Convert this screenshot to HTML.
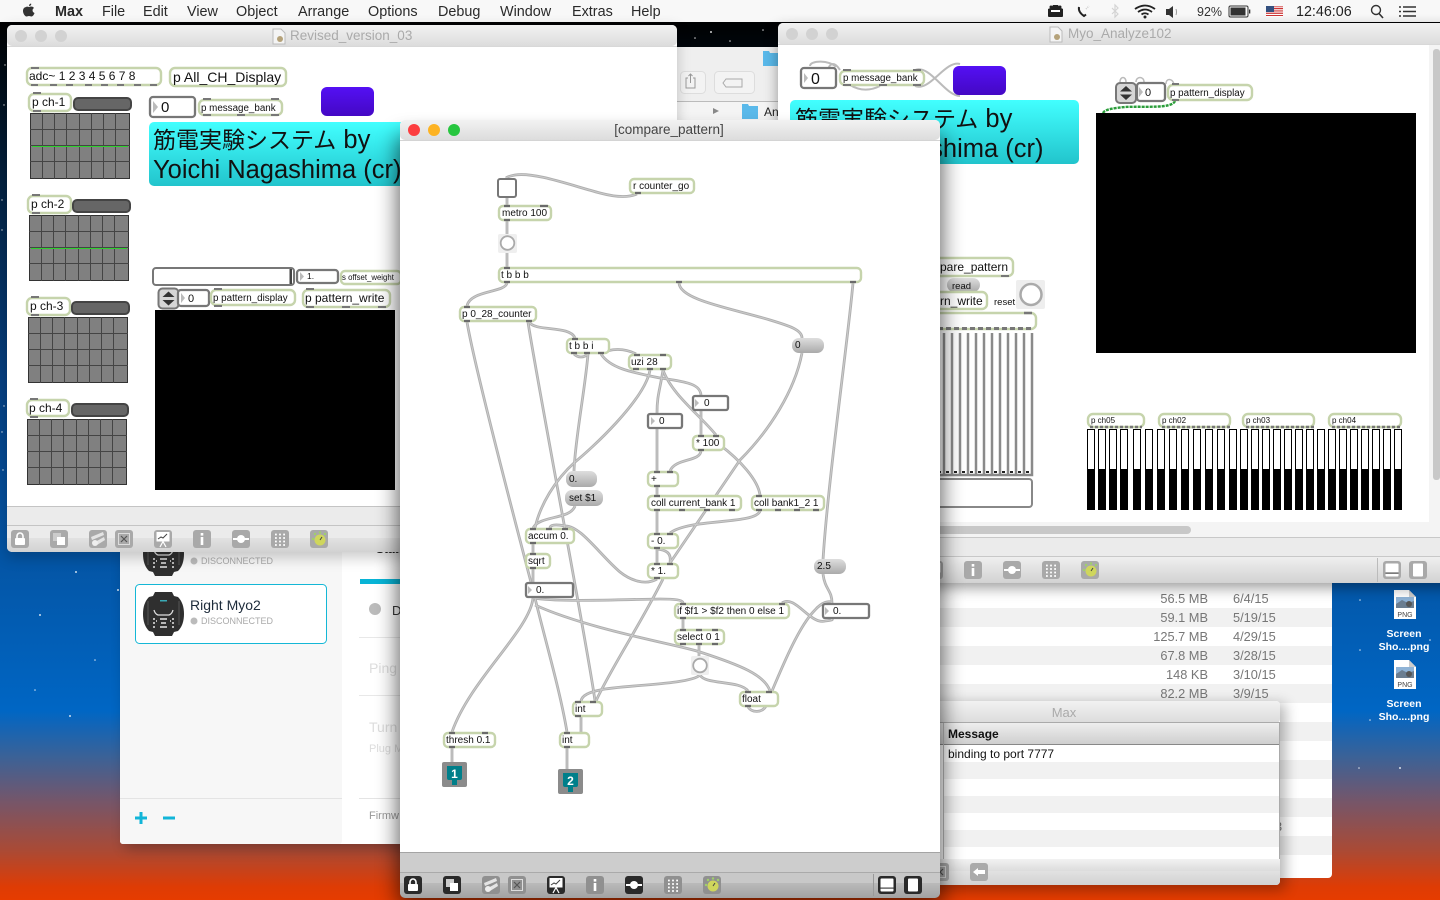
<!DOCTYPE html>
<html><head><meta charset="utf-8"><title>Max</title>
<style>
html,body{margin:0;padding:0;background:#000;width:1440px;height:900px;overflow:hidden}
svg{display:block}
text{font-family:"Liberation Sans","Noto Sans CJK JP",sans-serif;fill:#111}
.o{fill:#fff;stroke:#c6d4ac;stroke-width:2.4}
.n{fill:#fff;stroke:#777;stroke-width:2.3}
.m{fill:url(#msg)}
.t{font-size:10px}
.menu{font-size:14.4px;fill:#2a2a2a}
.f{font-size:12.8px;fill:#777}
.gl{fill:#fff}
.tri{fill:#bbb}
.cj{font-size:23px}
</style></head><body>
<svg xmlns="http://www.w3.org/2000/svg" width="1440" height="900" viewBox="0 0 1440 900">
<defs>
<linearGradient id="bg" x1="0" y1="0" x2="0" y2="1">
<stop offset="0.02" stop-color="#000"/><stop offset="0.2" stop-color="#04213f"/><stop offset="0.42" stop-color="#063f80"/><stop offset="0.62" stop-color="#0455a5"/><stop offset="0.79" stop-color="#0066c4"/><stop offset="0.84" stop-color="#3a6298"/><stop offset="0.89" stop-color="#75566a"/><stop offset="0.945" stop-color="#aa4a35"/><stop offset="0.985" stop-color="#de3c05"/><stop offset="1" stop-color="#e63c00"/>
</linearGradient>
<linearGradient id="msg" x1="0" y1="0" x2="0" y2="1"><stop offset="0" stop-color="#dedede"/><stop offset="1" stop-color="#aaa"/></linearGradient>
<linearGradient id="cy" x1="0" y1="0" x2="0" y2="1"><stop offset="0" stop-color="#42ffff"/><stop offset="1" stop-color="#22c4cc"/></linearGradient>
<linearGradient id="pu" x1="0" y1="0" x2="0" y2="1"><stop offset="0" stop-color="#5410f4"/><stop offset="1" stop-color="#4408c4"/></linearGradient>
<linearGradient id="tb" x1="0" y1="0" x2="0" y2="1"><stop offset="0" stop-color="#efefef"/><stop offset="1" stop-color="#d2d2d2"/></linearGradient>
<linearGradient id="tba" x1="0" y1="0" x2="0" y2="1"><stop offset="0" stop-color="#cacaca"/><stop offset="1" stop-color="#a2a2a2"/></linearGradient>
<linearGradient id="ti" x1="0" y1="0" x2="0" y2="1"><stop offset="0" stop-color="#f2f2f2"/><stop offset="1" stop-color="#dcdcdc"/></linearGradient>
<linearGradient id="hd" x1="0" y1="0" x2="0" y2="1"><stop offset="0" stop-color="#eeeeee"/><stop offset="1" stop-color="#cfcfcf"/></linearGradient>
<filter id="sh" x="-15%" y="-15%" width="130%" height="130%"><feGaussianBlur stdDeviation="11"/></filter>
<filter id="sh2" x="-15%" y="-15%" width="130%" height="130%"><feGaussianBlur stdDeviation="7"/></filter>
<g id="lock"><rect width="18" height="18" rx="3"/><rect class="gl" x="4" y="8" width="10" height="7" rx="1"/><path d="M6 8V6a3 3 0 0 1 6 0v2" fill="none" stroke="#fff" stroke-width="1.6"/></g>
<g id="ovl"><rect width="18" height="18" rx="3"/><rect x="3" y="3" width="8" height="8" fill="#ccc"/><rect class="gl" x="7" y="7" width="8" height="8"/></g>
<g id="tools"><rect width="18" height="18" rx="3"/><path d="M2 7l12-5 1 3-12 5zM6 12l9-5 1 3-8 5z" fill="#e4e4e4"/><circle cx="6" cy="13" r="3" fill="#eee"/></g>
<g id="xb"><rect width="18" height="18" rx="3"/><rect x="3.5" y="3.5" width="11" height="11" fill="none" stroke="#ddd"/><path d="M6 6l6 6M12 6l-6 6" stroke="#555" stroke-width="1.2"/></g>
<g id="pres"><rect width="18" height="18" rx="3"/><rect class="gl" x="2.5" y="2" width="13" height="9.5"/><path d="M4 9l3-2 2 1 4-4" stroke="#444" fill="none"/><path d="M9 11.5L6 17M9 11.5l3 5.5" stroke="#fff" stroke-width="1.2"/></g>
<g id="info"><rect width="18" height="18" rx="3"/><rect class="gl" x="7.7" y="3" width="2.6" height="2.6"/><rect class="gl" x="7.7" y="7" width="2.6" height="8"/></g>
<g id="cord"><rect width="18" height="18" rx="3"/><rect class="gl" x="1" y="8" width="16" height="2"/><circle class="gl" cx="9" cy="9" r="4"/></g>
<g id="grid"><rect width="18" height="18" rx="3"/><path d="M4 4.5h1.8M8.100 4.500h1.800M12.200 4.500h1.800M4 8h1.800M8.100 8h1.800M12.200 8h1.800M4 11.500h1.800M8.100 11.500h1.800M12.200 11.500h1.800M4 15h1.800M8.100 15h1.800M12.200 15h1.800" stroke="#fff" stroke-width="1.800" fill="none"/></g>
<g id="knob"><rect width="18" height="18" rx="3"/><circle cx="10" cy="10" r="5.500" fill="#cfd65c"/><path d="M10 10l2-3" stroke="#444"/><circle cx="3" cy="9" r="1.200" fill="#9fd06a"/><circle cx="5" cy="4" r="1.200" fill="#9fd06a"/><circle cx="10" cy="2.500" r="1.200" fill="#9fd06a"/><circle cx="15" cy="4" r="1.200" fill="#9fd06a"/></g>
<g id="pb"><rect width="18" height="18" rx="3"/><rect class="gl" x="2.500" y="2.500" width="13" height="13" rx="1"/><rect x="2.500" y="11.500" width="13" height="1.200" fill="#444"/></g>
<g id="pr"><rect width="18" height="18" rx="3"/><rect class="gl" x="4" y="2.500" width="10" height="13" rx="1"/></g>
<g id="ud"><rect x="0" y="0" width="20" height="20" rx="4" fill="#d6d6d6" stroke="#777" stroke-width="2"/><path d="M4 8.500L10 3l6 5.500zM4 11.500L10 17l6-5.500z" fill="#333"/></g>
<g id="grd"><rect x="0.500" y="0.500" width="99" height="65" fill="#808080" stroke="#333"/><path d="M12.500 0v66M24.500 0v66M36.500 0v66M49.500 0v66M61.500 0v66M73.500 0v66M85.500 0v66M0 16.500h100M0 32.500h100M0 48.500h100" stroke="#444" stroke-width="1" fill="none"/></g>
<g id="myo"><path d="M12 0h17l2 4 4 1q6 6 6 17 0 11-6 17l-4 1-2 4H12l-2-4-4-1q-6-6-6-17 0-11 6-17l4-1z" fill="#2f2f2f"/><path d="M5 9v24M36 9v24" stroke="#555" stroke-width="1" fill="none"/><path d="M11 18q1 4 4 5h11q3-1 4-5" stroke="#ddd" stroke-width="1.300" fill="none"/><rect x="17" y="8" width="7" height="1.500" fill="#3aa9b5"/><path d="M10 27h2M13 29h1M10 31h2M10 35h2M17 27h7M18 31h5M17 35h7M29 27h2M27 29h1M29 31h2M29 35h2" stroke="#e6e6e6" stroke-width="1.500" fill="none"/></g>
<g id="png"><path d="M0 0h15l7 7v22H0z" fill="#fff"/><path d="M15 0l7 7h-7z" fill="#ccc"/><rect x="2" y="7" width="18" height="11" fill="#8fb3d6"/><path d="M2 14l6-4 6 3 6-2v7H2z" fill="#6a7d90"/><circle cx="15" cy="14" r="3" fill="#555"/><text x="11" y="27" text-anchor="middle" font-size="7" style="fill:#444">PNG</text></g>
<g id="folder"><path d="M0 2h6l1 2h9v13H0z" fill="#5ab9ea"/></g>
<g id="doc"><path d="M0 0h8l4 4v11H0z" fill="#f4f4f4" stroke="#bbb"/><circle cx="7" cy="10" r="3" fill="#b5a27a"/></g>
</defs>

<!-- desktop -->
<rect width="1440" height="900" fill="url(#bg)"/>
<g fill="#fff" opacity=".8">
<circle cx="5" cy="65" r=".7"/><circle cx="4" cy="105" r=".7"/><circle cx="2" cy="200" r=".7"/><circle cx="2" cy="230" r=".7"/><circle cx="4" cy="406" r=".7"/><circle cx="2" cy="432" r=".7"/><circle cx="3" cy="470" r=".7"/><circle cx="76" cy="572" r="1"/><circle cx="40" cy="615" r="1"/><circle cx="118" cy="590" r="1"/><circle cx="70" cy="716" r="1"/><circle cx="35" cy="690" r=".8"/><circle cx="95" cy="660" r=".8"/><circle cx="711" cy="32" r="1"/><circle cx="695" cy="38" r=".8"/><circle cx="730" cy="41" r=".8"/><circle cx="763" cy="30" r=".8"/><circle cx="1360" cy="600" r=".8"/><circle cx="1359" cy="768" r=".8"/><circle cx="1360" cy="650" r=".8"/><circle cx="1400" cy="768" r="1"/><circle cx="1430" cy="640" r=".8"/><circle cx="1370" cy="720" r=".8"/>
</g>

<!-- menu bar -->
<rect width="1440" height="22" fill="#f8f8f8"/>
<path d="M32 4.500q-2 .5-2 2.500 1.500 0 2-1 .6-1 0-1.500zM27.500 8c-2.500 0-3.500 2-3.500 4 0 2.500 2 5.500 3.500 5.500 1 0 1.500-.5 2.500-.5s1.500.5 2.500.5c1.300 0 2.600-2 3-3.500-2.500-1-2.500-4-.5-5-.8-1.200-2-1.500-3-1.500-1 0-1.500.5-2 .5s-1.500-.5-2.500-.5z" fill="#333" transform="translate(-1 -1)"/>
<text class="menu" x="55" y="16" style="font-weight:700">Max</text>
<text class="menu" x="102" y="16">File</text>
<text class="menu" x="143" y="16">Edit</text>
<text class="menu" x="187" y="16">View</text>
<text class="menu" x="236" y="16">Object</text>
<text class="menu" x="298" y="16">Arrange</text>
<text class="menu" x="368" y="16">Options</text>
<text class="menu" x="438" y="16">Debug</text>
<text class="menu" x="500" y="16">Window</text>
<text class="menu" x="572" y="16">Extras</text>
<text class="menu" x="631" y="16">Help</text>
<!-- status icons -->
<path d="M1048 9q2-1 3-1l2-3h5l2 3q2 0 3 1v7q0 1-1 1h-13q-1 0-1-1z" fill="#222"/><circle cx="1051" cy="7" r="1.500" fill="#222"/><circle cx="1060" cy="7" r="1.500" fill="#222"/><rect x="1051" y="10" width="9" height="2" fill="#fff"/>
<path d="M1079 7q-1 5 5 9l2-1.500" fill="none" stroke="#222" stroke-width="2"/><path d="M1086 9l3-3" stroke="#ccc" stroke-width="1.500" stroke-dasharray="1 1"/>
<path d="M1112 8l6 6-3 3V5l3 3-6 6" fill="none" stroke="#d4d4d4" stroke-width="1.200"/>
<path d="M1135 9q10-7 20 0M1138 12q7-5 14 0M1141.500 14.500q3.500-2.500 7 0" fill="none" stroke="#222" stroke-width="1.800"/><circle cx="1145" cy="17" r="1.500" fill="#222"/>
<path d="M1166 9h3l4-3v12l-4-3h-3z" fill="#333"/><path d="M1176 9q1 3 0 6" stroke="#999" fill="none"/>
<text x="1197" y="16" font-size="12.500" style="fill:#333">92%</text>
<rect x="1229" y="6" width="19" height="11" rx="1.500" fill="none" stroke="#333"/><rect x="1230.500" y="7.500" width="15" height="8" fill="#333"/><rect x="1249" y="9.500" width="1.300" height="4" fill="#333"/>
<rect x="1266" y="6" width="17" height="11" fill="#fff"/><path d="M1266 6.800h17M1266 8.500h17M1266 10.200h17M1266 11.900h17M1266 13.600h17M1266 15.500h17" stroke="#c33" stroke-width=".9"/><rect x="1266" y="6" width="8" height="6" fill="#33507f"/>
<text x="1296" y="16" font-size="14.300" style="fill:#222">12:46:06</text>
<circle cx="1376" cy="10" r="4.500" fill="none" stroke="#333" stroke-width="1.400"/><path d="M1379 13.500l4 4.500" stroke="#333" stroke-width="1.600"/>
<path d="M1399 7h2M1399 11.500h2M1399 16h2M1403 7h13M1403 11.500h13M1403 16h13" stroke="#333" stroke-width="1.600"/>

<!-- desktop icons -->
<use href="#png" x="1394" y="590"/><use href="#png" x="1394" y="660"/>
<g text-anchor="middle">
<text x="1404" y="637" style="fill:#fff;font-size:10.500px;font-weight:700">Screen</text>
<text x="1404" y="650" style="fill:#fff;font-size:10.500px;font-weight:700">Sho....png</text>
<text x="1404" y="707" style="fill:#fff;font-size:10.500px;font-weight:700">Screen</text>
<text x="1404" y="720" style="fill:#fff;font-size:10.500px;font-weight:700">Sho....png</text>
</g>

<!-- Finder -->
<rect x="660" y="47" width="672" height="831" rx="4" fill="#fff"/>
<rect x="660" y="47" width="672" height="54" fill="#efefef"/>
<rect x="660" y="101" width="672" height="1" fill="#bbb"/>
<rect x="660" y="102" width="672" height="18" fill="#f4f4f4"/>
<rect x="680.500" y="71.500" width="25" height="22" rx="4" fill="#f3f3f3" stroke="#ddd"/>
<path d="M688 78h-2v10h9V78h-2M690.500 83v-9M688.500 76l2-2 2 2" fill="none" stroke="#999"/>
<rect x="714.500" y="71.500" width="40" height="22" rx="4" fill="#f3f3f3" stroke="#ddd"/>
<path d="M726 79h16v8h-16l-3-4z" fill="none" stroke="#aaa"/>
<use href="#folder" x="763" y="49"/>
<path d="M713 108l6 3-6 3z" fill="#888"/>
<use href="#folder" x="742" y="102"/>
<text x="764" y="116" font-size="12" style="fill:#222">An</text>
<g fill="#f1f1f1"><rect x="940" y="608" width="392" height="19"/><rect x="940" y="646" width="392" height="19"/><rect x="940" y="684" width="392" height="19"/><rect x="940" y="722" width="392" height="19"/><rect x="940" y="760" width="392" height="19"/><rect x="940" y="798" width="392" height="19"/><rect x="940" y="836" width="392" height="19"/></g>
<text class="f" x="1208" y="603" text-anchor="end">56.5 MB</text>
<text class="f" x="1208" y="622" text-anchor="end">59.1 MB</text>
<text class="f" x="1208" y="641" text-anchor="end">125.7 MB</text>
<text class="f" x="1208" y="660" text-anchor="end">67.8 MB</text>
<text class="f" x="1208" y="679" text-anchor="end">148 KB</text>
<text class="f" x="1208" y="698" text-anchor="end">82.2 MB</text>
<text class="f" x="1233" y="603">6/4/15</text>
<text class="f" x="1233" y="622">5/19/15</text>
<text class="f" x="1233" y="641">4/29/15</text>
<text class="f" x="1233" y="660">3/28/15</text>
<text class="f" x="1233" y="679">3/10/15</text>
<text class="f" x="1233" y="698">3/9/15</text>
<text class="f" x="1275" y="831">3</text>

<!-- Myo Connect -->
<rect x="125" y="550" width="290" height="298" fill="#000" opacity=".28" filter="url(#sh2)"/>
<rect x="120" y="520" width="300" height="324" rx="3" fill="#fff"/>
<rect x="120" y="520" width="222" height="324" rx="3" fill="#f7f7f7"/>
<rect x="120" y="798" width="222" height="1" fill="#e4e4e4"/>
<use href="#myo" x="143" y="532"/>
<circle cx="194" cy="561" r="3.500" fill="#bbb"/>
<text x="201" y="564" font-size="9" style="fill:#aaa">DISCONNECTED</text>
<rect x="135.500" y="584.500" width="191" height="59" rx="4" fill="#fff" stroke="#14b7d6"/>
<use href="#myo" x="143" y="592"/>
<text x="190" y="610" font-size="14" style="fill:#1d2b3a">Right Myo2</text>
<circle cx="194" cy="621" r="3.500" fill="#bbb"/>
<text x="201" y="624" font-size="9" style="fill:#aaa">DISCONNECTED</text>
<path d="M135 818h12M141 812v12" stroke="#12b5d8" stroke-width="3"/>
<path d="M163 818h12" stroke="#12b5d8" stroke-width="3"/>
<rect x="360" y="579" width="60" height="5" fill="#08b4d6"/>
<circle cx="375" cy="609" r="6" fill="#bbb"/>
<text x="392" y="615" font-size="13" style="fill:#333">D</text>
<text x="376" y="553" font-size="12" style="fill:#222;font-weight:700">Status</text>
<rect x="359" y="637" width="60" height="1" fill="#e8e8e8"/>
<text x="369" y="673" font-size="14" style="fill:#ddd">Ping</text>
<rect x="359" y="695" width="60" height="1" fill="#e8e8e8"/>
<text x="369" y="732" font-size="14" style="fill:#ddd">Turn</text>
<text x="369" y="752" font-size="11" style="fill:#ddd">Plug M</text>
<rect x="359" y="798" width="60" height="1" fill="#e4e4e4"/>
<text x="369" y="819" font-size="11" style="fill:#999">Firmw</text>

<!-- Max window -->
<rect x="930" y="704" width="355" height="186" fill="#000" opacity=".3" filter="url(#sh2)"/>
<rect x="900" y="701" width="380" height="184" rx="4" fill="#fff"/>
<rect x="900" y="701" width="380" height="22" rx="4" fill="url(#ti)"/>
<text x="1064" y="717" text-anchor="middle" font-size="13" style="fill:#aaa">Max</text>
<rect x="900" y="722" width="380" height="1" fill="#aaa"/>
<rect x="900" y="723" width="380" height="21" fill="url(#hd)"/>
<rect x="900" y="744" width="380" height="1" fill="#888"/>
<rect x="943" y="723" width="1" height="136" fill="#bbb"/><rect x="1279" y="723" width="1" height="136" fill="#aaa"/>
<g fill="#f1f1f1"><rect x="944" y="762" width="335" height="17"/><rect x="944" y="796" width="335" height="17"/><rect x="944" y="830" width="335" height="17"/></g>
<text x="948" y="738" font-size="12" style="font-weight:700">Message</text>
<text x="948" y="758" font-size="12">binding to port 7777</text>
<rect x="900" y="859" width="380" height="26" rx="4" fill="url(#tb)"/>
<rect x="900" y="859" width="380" height="12" fill="url(#ti)"/>
<use href="#xb" x="931" y="863" fill="#aaa"/>
<rect x="970" y="863" width="18" height="18" rx="3" fill="#aaa"/><path d="M973 872l5-4v2h7v4h-7v2z" fill="#fff"/>

<!-- Window 1 : Revised_version_03 -->
<rect x="7" y="28" width="670" height="530" fill="#000" opacity=".2" filter="url(#sh2)"/>
<rect x="7" y="25" width="670" height="527" rx="5" fill="#fff"/>
<rect x="7" y="25" width="670" height="21" rx="5" fill="url(#ti)"/>
<rect x="7" y="46" width="670" height="1" fill="#d8d8d8"/>
<circle cx="21" cy="36" r="6" fill="#d2d2d2"/><circle cx="41" cy="36" r="6" fill="#d2d2d2"/><circle cx="61" cy="36" r="6" fill="#d2d2d2"/>
<use href="#doc" x="273" y="29"/>
<text x="290" y="40" font-size="13.500" style="fill:#aaa">Revised_version_03</text>
<rect class="o" x="27" y="68" width="134" height="17" rx="5"/>
<text x="29" y="80" font-size="12">adc~ 1 2 3 4 5 6 7 8</text>
<path d="M31 68h8M31 85h7M50 85h7M66 85h7M85 85h7M101 85h7M117 85h7M134 85h7M150 85h7" stroke="#777" stroke-width="2"/>
<rect class="o" x="170" y="68" width="116" height="18" rx="5"/>
<text x="173" y="82" font-size="14">p All_CH_Display</text>
<!-- ch groups -->
<rect class="o" x="29" y="94" width="42" height="17" rx="5"/><text x="32" y="106" font-size="12">p ch-1</text>
<path d="M33 93h8M33 111h8" stroke="#777" stroke-width="2"/>
<rect x="74" y="98" width="57" height="12" rx="4" fill="#666" stroke="#444" stroke-width="2"/>
<use href="#grd" x="30" y="113"/><rect x="32" y="146" width="96" height="1" fill="#2ed02e"/>
<rect class="o" x="28" y="196" width="43" height="17" rx="5"/><text x="31" y="208" font-size="12">p ch-2</text>
<path d="M32 195h8M32 213h8" stroke="#777" stroke-width="2"/>
<rect x="73" y="200" width="57" height="12" rx="4" fill="#666" stroke="#444" stroke-width="2"/>
<use href="#grd" x="29" y="215"/><rect x="31" y="248" width="96" height="1" fill="#2ed02e"/>
<rect class="o" x="27" y="298" width="43" height="17" rx="5"/><text x="30" y="310" font-size="12">p ch-3</text>
<path d="M31 297h8M31 315h8" stroke="#777" stroke-width="2"/>
<rect x="72" y="302" width="57" height="12" rx="4" fill="#666" stroke="#444" stroke-width="2"/>
<use href="#grd" x="28" y="317"/>
<rect class="o" x="27" y="400" width="42" height="16" rx="5"/><text x="29" y="412" font-size="12">p ch-4</text>
<path d="M30 399h8M30 417h8" stroke="#777" stroke-width="2"/>
<rect x="72" y="404" width="56" height="12" rx="4" fill="#666" stroke="#444" stroke-width="2"/>
<use href="#grd" x="27" y="419"/>
<!-- number + bank -->
<rect class="n" x="150" y="97" width="45" height="20" rx="3"/><path d="M153 101l5 6-5 6z" class="tri"/><text x="161" y="112" font-size="15">0</text>
<rect class="o" x="199" y="100" width="83" height="15" rx="5"/><text x="201" y="111" font-size="9.800">p message_bank</text>
<path d="M203 99h8M203 115h8M237 115h8M271 99h8M271 115h8" stroke="#777" stroke-width="2"/>
<rect x="321" y="87" width="53" height="29" rx="6" fill="url(#pu)"/>
<rect x="149" y="122" width="300" height="64" rx="5" fill="url(#cy)"/>
<text x="153" y="148" font-size="25.500"><tspan class="cj">筋電実験システム</tspan> by</text>
<text x="153" y="178" font-size="25.500">Yoichi Nagashima (cr)</text>
<rect x="153" y="268" width="141" height="17" rx="3" fill="#fff" stroke="#777" stroke-width="2"/><rect x="289.500" y="269" width="2.500" height="15" fill="#444"/>
<rect class="n" x="297" y="270" width="41" height="13" rx="3"/><path d="M300 272l4 4.500-4 4.500z" class="tri"/><text x="307" y="279" font-size="8.500">1.</text>
<rect class="o" x="341" y="271" width="60" height="13" rx="4"/><text x="342" y="280" font-size="7.800">s offset_weight</text>
<use href="#ud" x="158.500" y="288.500"/>
<rect class="n" x="178" y="290" width="31" height="16" rx="3"/><path d="M181 293l4 5-4 5z" class="tri"/><text x="188" y="302" font-size="11">0</text>
<rect class="o" x="211" y="290" width="84" height="15" rx="5"/><text x="213" y="301" font-size="9.800">p pattern_display</text>
<path d="M214 289h8M214 306h8" stroke="#777" stroke-width="2"/>
<rect class="o" x="303" y="290" width="87" height="17" rx="5"/><text x="305" y="302" font-size="12">p pattern_write</text>
<path d="M306 307h8M342 307h8M378 307h8M306 289h8" stroke="#777" stroke-width="2"/>
<rect x="155" y="310" width="240" height="180" fill="#000"/>
<!-- bottom of window 1 -->
<rect x="7" y="506" width="670" height="1" fill="#c4c4c4"/>
<rect x="7" y="507" width="670" height="18" fill="#ebebeb"/>
<rect x="7" y="525" width="670" height="1" fill="#c4c4c4"/>
<rect x="7" y="526" width="670" height="26" rx="5" fill="url(#tb)"/>
<rect x="7" y="526" width="670" height="12" fill="#ebebeb"/>
<g fill="#a9a9a9">
<use href="#lock" x="11" y="530"/><use href="#ovl" x="50" y="530"/><use href="#tools" x="89" y="530"/><use href="#xb" x="115" y="530"/><use href="#pres" x="154" y="530"/><use href="#info" x="193" y="530"/><use href="#cord" x="232" y="530"/><use href="#grid" x="271" y="530"/><use href="#knob" x="310" y="530"/>
</g>

<!-- Window 2 : Myo_Analyze102 -->
<rect x="778" y="28" width="680" height="560" fill="#000" opacity=".38" filter="url(#sh2)"/>
<rect x="778" y="23" width="680" height="560" rx="5" fill="#f4f4f4"/>
<rect x="778" y="23" width="680" height="22" rx="5" fill="url(#ti)"/>
<rect x="778" y="44" width="680" height="1" fill="#d8d8d8"/>
<rect x="778" y="45" width="651" height="477" fill="#fff"/>
<circle cx="792" cy="34" r="6" fill="#d2d2d2"/><circle cx="812" cy="34" r="6" fill="#d2d2d2"/><circle cx="832" cy="34" r="6" fill="#d2d2d2"/>
<use href="#doc" x="1050" y="27"/>
<text x="1068" y="38" font-size="13.500" style="fill:#aaa">Myo_Analyze102</text>
<rect x="1433" y="49" width="7" height="431" rx="3" fill="#c8c8c8"/>
<!-- wires in window 2 -->
<g fill="none" stroke="#bbb" stroke-width="2">
<path d="M915 70c15-6 30 26 45 26"/><path d="M915 86c15 6 30-26 45-22"/><path d="M840 70c-5-8-10-8-12 0M810 66c0-6 20-6 26 1M850 85c10 6 20 6 30 1"/>
<path d="M1120 82c0-6 6-6 6 0M1136 82c0-6 8-6 8 0M1166 84c0-6 6-6 8 0" stroke-width="1.500"/>
</g>
<path d="M1175 101c-3 8-30 5-50 6-10 1-20 2-22 6" fill="none" stroke="#2a9d3a" stroke-width="2.400" stroke-dasharray="3 1"/>
<rect class="n" x="801" y="68" width="35" height="20" rx="3"/><path d="M804 73l4 5-4 5z" class="tri"/><text x="811" y="84" font-size="16">0</text>
<rect class="o" x="840" y="71" width="84" height="14" rx="5"/><text x="843" y="81" font-size="9.800">p message_bank</text>
<path d="M843 70h8M843 85h8M879 85h8M913 70h8M913 85h8" stroke="#777" stroke-width="2"/>
<rect x="953" y="66" width="53" height="29" rx="6" fill="url(#pu)"/>
<rect x="790" y="100" width="289" height="64" rx="5" fill="url(#cy)"/>
<text x="795" y="127" font-size="25.500"><tspan class="cj">筋電実験システム</tspan> by</text>
<text x="795" y="157" font-size="25.500">Yoichi Nagashima (cr)</text>
<use href="#ud" x="1116" y="83"/>
<rect class="n" x="1137" y="83" width="28" height="18" rx="3"/><path d="M1139 87l4 5-4 5z" class="tri"/><text x="1145" y="96" font-size="11">0</text>
<rect class="o" x="1168" y="85" width="84" height="15" rx="5"/><text x="1170" y="96" font-size="9.800">p pattern_display</text>
<path d="M1172 84h7M1172 100h7" stroke="#777" stroke-width="2"/>
<rect x="1096" y="113" width="320" height="240" fill="#000"/>
<rect class="o" x="860" y="258" width="153" height="18" rx="5"/><text x="940" y="271" font-size="12">pare_pattern</text>
<path d="M1001 276h8" stroke="#777" stroke-width="2"/>
<rect x="947" y="278" width="33" height="14" rx="7" fill="url(#msg)"/><text x="952" y="289" font-size="9.500">read</text>
<rect class="o" x="860" y="292" width="127" height="17" rx="5"/><text x="940" y="305" font-size="12">rn_write</text>
<text x="994" y="305" font-size="9.500">reset</text>
<rect x="1016" y="280" width="29" height="29" rx="2" fill="#eee"/><circle cx="1031" cy="294.500" r="10.500" fill="#fff" stroke="#aaa" stroke-width="2.500"/>
<rect class="o" x="860" y="313" width="176" height="16" rx="5"/>
<path d="M1024 313h8" stroke="#777" stroke-width="2.500"/>
<path d="M938 328.500h93" stroke="#777" stroke-width="3" stroke-dasharray="5 3"/>
<g fill="none" stroke="#8a8a8a" stroke-width="2.500"><path d="M936 333V475h96V333M944 333v142M952 333v142M960 333v142M968 333v142M976 333v142M984 333v142M992 333v142M1000 333v142M1008 333v142M1016 333v142M1024 333v142"/></g>
<path d="M938 472h93" stroke="#222" stroke-width="2" stroke-dasharray="3 5"/>
<rect x="860" y="479" width="172" height="28" rx="3" fill="#fff" stroke="#888" stroke-width="2"/>
<!-- ch bars -->
<rect class="o" x="1088" y="414" width="56" height="13" rx="5"/><text x="1091" y="423" font-size="8">p ch05</text>
<rect class="o" x="1159" y="414" width="71" height="13" rx="5"/><text x="1162" y="423" font-size="8">p ch02</text>
<rect class="o" x="1243" y="414" width="71" height="13" rx="5"/><text x="1246" y="423" font-size="8">p ch03</text>
<rect class="o" x="1329" y="414" width="72" height="13" rx="5"/><text x="1332" y="423" font-size="8">p ch04</text>
<path d="M1090 427h52M1162 427h68M1246 427h68M1332 427h68" stroke="#777" stroke-width="2.500" stroke-dasharray="3 2" fill="none"/>
<g fill="#000">
<rect x="1087" y="469" width="8" height="41"/><rect x="1098" y="469" width="8" height="41"/><rect x="1109" y="469" width="8" height="41"/><rect x="1120" y="469" width="8" height="41"/><rect x="1133" y="469" width="8" height="41"/><rect x="1145" y="469" width="8" height="41"/><rect x="1157" y="469" width="8" height="41"/><rect x="1169" y="469" width="8" height="41"/><rect x="1181" y="469" width="8" height="41"/><rect x="1193" y="469" width="8" height="41"/><rect x="1205" y="469" width="8" height="41"/><rect x="1217" y="469" width="8" height="41"/><rect x="1229" y="469" width="8" height="41"/><rect x="1240" y="469" width="8" height="41"/><rect x="1251" y="469" width="8" height="41"/><rect x="1262" y="469" width="8" height="41"/><rect x="1273" y="469" width="8" height="41"/><rect x="1284" y="469" width="8" height="41"/><rect x="1295" y="469" width="8" height="41"/><rect x="1306" y="469" width="8" height="41"/><rect x="1317" y="469" width="8" height="41"/><rect x="1328" y="469" width="8" height="41"/><rect x="1339" y="469" width="8" height="41"/><rect x="1350" y="469" width="8" height="41"/><rect x="1361" y="469" width="8" height="41"/><rect x="1372" y="469" width="8" height="41"/><rect x="1383" y="469" width="8" height="41"/><rect x="1394" y="469" width="8" height="41"/>
</g>
<g fill="none" stroke="#000" stroke-width="1">
<rect x="1087.500" y="429.500" width="7" height="40"/><rect x="1098.500" y="429.500" width="7" height="40"/><rect x="1109.500" y="429.500" width="7" height="40"/><rect x="1120.500" y="429.500" width="7" height="40"/><rect x="1133.500" y="429.500" width="7" height="40"/><rect x="1145.500" y="429.500" width="7" height="40"/><rect x="1157.500" y="429.500" width="7" height="40"/><rect x="1169.500" y="429.500" width="7" height="40"/><rect x="1181.500" y="429.500" width="7" height="40"/><rect x="1193.500" y="429.500" width="7" height="40"/><rect x="1205.500" y="429.500" width="7" height="40"/><rect x="1217.500" y="429.500" width="7" height="40"/><rect x="1229.500" y="429.500" width="7" height="40"/><rect x="1240.500" y="429.500" width="7" height="40"/><rect x="1251.500" y="429.500" width="7" height="40"/><rect x="1262.500" y="429.500" width="7" height="40"/><rect x="1273.500" y="429.500" width="7" height="40"/><rect x="1284.500" y="429.500" width="7" height="40"/><rect x="1295.500" y="429.500" width="7" height="40"/><rect x="1306.500" y="429.500" width="7" height="40"/><rect x="1317.500" y="429.500" width="7" height="40"/><rect x="1328.500" y="429.500" width="7" height="40"/><rect x="1339.500" y="429.500" width="7" height="40"/><rect x="1350.500" y="429.500" width="7" height="40"/><rect x="1361.500" y="429.500" width="7" height="40"/><rect x="1372.500" y="429.500" width="7" height="40"/><rect x="1383.500" y="429.500" width="7" height="40"/><rect x="1394.500" y="429.500" width="7" height="40"/>
</g>
<!-- bottom of window 2 -->
<rect x="778" y="522" width="662" height="15" fill="#f4f4f4"/>
<rect x="800" y="526" width="391" height="8" rx="4" fill="#c8c8c8"/>
<rect x="778" y="537" width="662" height="1" fill="#c8c8c8"/>
<rect x="778" y="538" width="662" height="18" fill="#ebebeb"/>
<rect x="778" y="556" width="662" height="1" fill="#c8c8c8"/>
<rect x="778" y="557" width="662" height="26" fill="url(#tb)"/>
<rect x="1377" y="558" width="1" height="24" fill="#bbb"/>
<g fill="#a9a9a9">
<use href="#pres" x="925" y="561"/><use href="#info" x="964" y="561"/><use href="#cord" x="1003" y="561"/><use href="#grid" x="1042" y="561"/><use href="#knob" x="1081" y="561"/><use href="#pb" x="1383" y="561"/><use href="#pr" x="1409" y="561"/>
</g>

<!-- Compare window -->
<rect x="398" y="136" width="544" height="770" fill="#000" opacity=".62" filter="url(#sh)"/>
<rect x="400" y="120" width="540" height="777" rx="5" fill="#fff"/>
<rect x="400" y="120" width="540" height="20" rx="5" fill="url(#ti)"/>
<rect x="400" y="140" width="540" height="1" fill="#d4d4d4"/>
<circle cx="414" cy="130" r="6" fill="#fc3d3f"/><circle cx="434" cy="130" r="6" fill="#fdb323"/><circle cx="454" cy="130" r="6" fill="#27c63f"/>
<text x="669" y="134" text-anchor="middle" font-size="13.500" style="fill:#444">[compare_pattern]</text>
<rect x="400" y="852" width="540" height="1" fill="#a4a4a4"/>
<rect x="400" y="853" width="540" height="19" fill="#cdcdcd"/>
<rect x="400" y="872" width="540" height="1" fill="#aaa"/>
<rect x="400" y="873" width="540" height="25" rx="5" fill="url(#tba)"/>
<rect x="400" y="873" width="540" height="10" fill="#c8c8c8"/>
<rect x="873" y="874" width="1" height="22" fill="#999"/>
<use href="#lock" x="404" y="876" fill="#2a2a2a"/>
<use href="#ovl" x="443" y="876" fill="#2a2a2a"/>
<use href="#tools" x="482" y="876" fill="#909090"/>
<use href="#xb" x="508" y="876" fill="#909090"/>
<use href="#pres" x="547" y="876" fill="#2a2a2a"/>
<use href="#info" x="586" y="876" fill="#909090"/>
<use href="#cord" x="625" y="876" fill="#2a2a2a"/>
<use href="#grid" x="664" y="876" fill="#909090"/>
<use href="#knob" x="703" y="876" fill="#909090"/>
<use href="#pb" x="878" y="876" fill="#2a2a2a"/>
<use href="#pr" x="904" y="876" fill="#2a2a2a"/>

<!-- wires -->
<g id="w" fill="none">
<path d="M637 194C628 198 615 197 600 193C570 185 535 172 515 175C510 176 507 177 506 178"/>
<path d="M507 198V205M507 221V234M507 253V267"/>
<path d="M507 283C505 293 470 290 467 306"/>
<path d="M679 283C680 300 730 308 770 320C790 326 802 330 802 338"/>
<path d="M853 283C848 340 828 480 823 560"/>
<path d="M823 574C825 590 832 590 832 603"/>
<path d="M467 322C475 370 520 540 533 590C545 640 560 690 567 732"/>
<path d="M528 322C535 370 590 660 595 701"/>
<path d="M529 322C535 332 570 325 575 338"/>
<path d="M588 354C585 390 575 440 574 471"/>
<path d="M574 354C578 358 584 358 588 354"/>
<path d="M601 354C610 348 625 348 636 354"/>
<path d="M601 354C610 368 630 372 660 378C690 382 700 385 701 395"/>
<path d="M701 411V435"/>
<path d="M650 370C645 400 590 450 575 462C555 480 540 505 535 528"/>
<path d="M663 370C660 390 657 395 657 413"/>
<path d="M663 370C672 395 700 415 716 435"/>
<path d="M720 445C740 460 758 480 760 495"/>
<path d="M802 353C795 390 770 430 740 460L670 563"/>
<path d="M663 579C640 625 610 670 596 701"/>
<path d="M701 451C700 462 675 458 670 471"/>
<path d="M657 429V471M657 487V495M657 511V533M657 549V563"/>
<path d="M657 549C665 550 672 552 670 563"/>
<path d="M760 511C755 525 690 518 670 533"/>
<path d="M575 506C570 520 540 515 533 528"/>
<path d="M533 544V553M533 569V582"/>
<path d="M657 579C645 586 630 580 620 572C600 555 580 525 565 526C555 524 550 525 550 528"/>
<path d="M533 598C560 602 600 600 660 599C675 599 683 600 683 603"/>
<path d="M533 598C530 630 470 680 452 732"/>
<path d="M535 605C590 630 680 645 700 652C740 665 765 675 770 691"/>
<path d="M782 603C795 594 810 625 825 621C832 620 833 620 832 619"/>
<path d="M683 619V629M699 645V656"/>
<path d="M700 675C690 685 620 685 600 690C590 692 582 695 581 701"/>
<path d="M700 675C705 685 740 680 748 691"/>
<path d="M772 691C785 660 800 625 815 610C822 602 830 600 832 603"/>
<path d="M748 707C752 713 762 713 766 706"/>
<path d="M581 717V732M452 748V762M567 748V769"/>
</g>
<use href="#w" stroke="#b0b0b0" stroke-width="2.800"/>
<use href="#w" stroke="#cfcfcf" stroke-width=".8"/>

<!-- objects -->
<rect x="498" y="179" width="18" height="18" rx="2" fill="#fff" stroke="#777" stroke-width="2"/>
<rect class="o" x="630" y="179" width="64" height="14" rx="4"/><text class="t" x="633" y="189">r counter_go</text>
<rect class="o" x="499" y="206" width="52" height="14" rx="4"/><text class="t" x="502" y="216">metro 100</text>
<rect x="498" y="234" width="19" height="19" rx="2" fill="#efefef"/><circle cx="507.500" cy="243" r="6.800" fill="#fff" stroke="#aaa" stroke-width="1.800"/>
<rect class="o" x="499" y="268" width="362" height="14" rx="4"/><text class="t" x="501" y="278">t b b b</text>
<rect class="o" x="460" y="307" width="76" height="14" rx="4"/><text class="t" x="462" y="317">p 0_28_counter</text>
<rect class="o" x="567" y="339" width="42" height="14" rx="4"/><text class="t" x="569" y="349">t b b i</text>
<rect class="o" x="629" y="355" width="42" height="14" rx="4"/><text class="t" x="631" y="365">uzi 28</text>
<rect class="m" x="792" y="338" width="32" height="15" rx="7"/><text class="t" x="795" y="348">0</text>
<rect class="n" x="693" y="396" width="35" height="14" rx="2"/><path d="M695 399l4 4-4 4z" class="tri"/><text class="t" x="704" y="406">0</text>
<rect class="n" x="648" y="414" width="34" height="14" rx="2"/><path d="M651 417l4 4-4 4z" class="tri"/><text class="t" x="659" y="424">0</text>
<rect class="o" x="693" y="436" width="31" height="14" rx="4"/><text class="t" x="696" y="446">* 100</text>
<rect class="o" x="648" y="472" width="30" height="14" rx="4"/><text class="t" x="651" y="482">+</text>
<rect class="m" x="566" y="471" width="31" height="16" rx="7"/><text class="t" x="569" y="482">0.</text>
<rect class="m" x="565" y="490" width="38" height="16" rx="7"/><text class="t" x="569" y="501">set $1</text>
<rect class="o" x="648" y="496" width="93" height="14" rx="4"/><text class="t" x="651" y="506">coll current_bank 1</text>
<rect class="o" x="752" y="496" width="72" height="14" rx="4"/><text class="t" x="754" y="506">coll bank1_2 1</text>
<rect class="o" x="526" y="529" width="48" height="14" rx="4"/><text class="t" x="528" y="539">accum 0.</text>
<rect class="o" x="648" y="534" width="30" height="14" rx="4"/><text class="t" x="651" y="544">- 0.</text>
<rect class="o" x="526" y="554" width="24" height="14" rx="4"/><text class="t" x="528" y="564">sqrt</text>
<rect class="o" x="648" y="564" width="30" height="14" rx="4"/><text class="t" x="651" y="574">* 1.</text>
<rect class="m" x="814" y="559" width="32" height="15" rx="7"/><text class="t" x="817" y="569">2.5</text>
<rect class="n" x="526" y="583" width="47" height="14" rx="2"/><path d="M528 586l4 4-4 4z" class="tri"/><text class="t" x="536" y="593">0.</text>
<rect class="o" x="675" y="604" width="114" height="14" rx="4"/><text class="t" x="677" y="614">if $f1 &gt; $f2 then 0 else 1</text>
<rect class="n" x="823" y="604" width="46" height="14" rx="2"/><path d="M825 607l4 4-4 4z" class="tri"/><text class="t" x="833" y="614">0.</text>
<rect class="o" x="675" y="630" width="49" height="14" rx="4"/><text class="t" x="677" y="640">select 0 1</text>
<rect x="691" y="656" width="18" height="19" rx="2" fill="#efefef"/><circle cx="700" cy="665.500" r="6.800" fill="#fff" stroke="#aaa" stroke-width="1.800"/>
<rect class="o" x="740" y="692" width="38" height="14" rx="4"/><text class="t" x="742" y="702">float</text>
<rect class="o" x="573" y="702" width="29" height="14" rx="4"/><text class="t" x="575" y="712">int</text>
<rect class="o" x="444" y="733" width="51" height="14" rx="4"/><text class="t" x="446" y="743">thresh 0.1</text>
<rect class="o" x="560" y="733" width="29" height="14" rx="4"/><text class="t" x="562" y="743">int</text>
<rect x="442" y="762" width="25" height="25" rx="2" fill="#8b8b8b"/><path d="M447 766h15v12q0 2-2 2h-3v5h-5v-5h-3q-2 0-2-2z" fill="#007f8a"/><text x="454.500" y="778" text-anchor="middle" font-size="12" style="fill:#fff;font-weight:700">1</text>
<rect x="558" y="769" width="25" height="25" rx="2" fill="#8b8b8b"/><path d="M563 773h15v12q0 2-2 2h-3v5h-5v-5h-3q-2 0-2-2z" fill="#007f8a"/><text x="570.500" y="785" text-anchor="middle" font-size="12" style="fill:#fff;font-weight:700">2</text>
<path d="M635 193h6M504 206h6M540 206h8M504 220h6M504 268h6M504 282h6M676 282h6M850 282h6M464 307h6M464 321h6M526 321h6M572 339h6M571 353h6M584 353h6M598 353h6M634 355h6M660 355h6M633 369h6M647 369h6M660 369h6M698 436h6M713 436h6M698 450h6M654 472h6M667 472h6M654 486h6M654 496h6M654 510h6M679 510h6M704 510h6M729 510h6M756 496h6M756 510h6M775 510h6M794 510h6M813 510h6M530 529h6M546 529h6M562 529h6M530 543h6M654 534h6M667 534h6M654 548h6M530 554h6M530 568h6M654 564h6M667 564h6M654 578h6M680 604h6M779 604h6M680 618h6M680 630h6M696 630h6M712 630h6M680 644h6M696 644h6M712 644h6M745 692h6M766 692h6M745 706h6M575 702h6M590 702h6M575 716h6M449 733h6M482 733h6M449 747h6M564 733h6M564 747h6" stroke="#6a6a6a" stroke-width="2.200" fill="none"/>
</svg>
</body></html>
